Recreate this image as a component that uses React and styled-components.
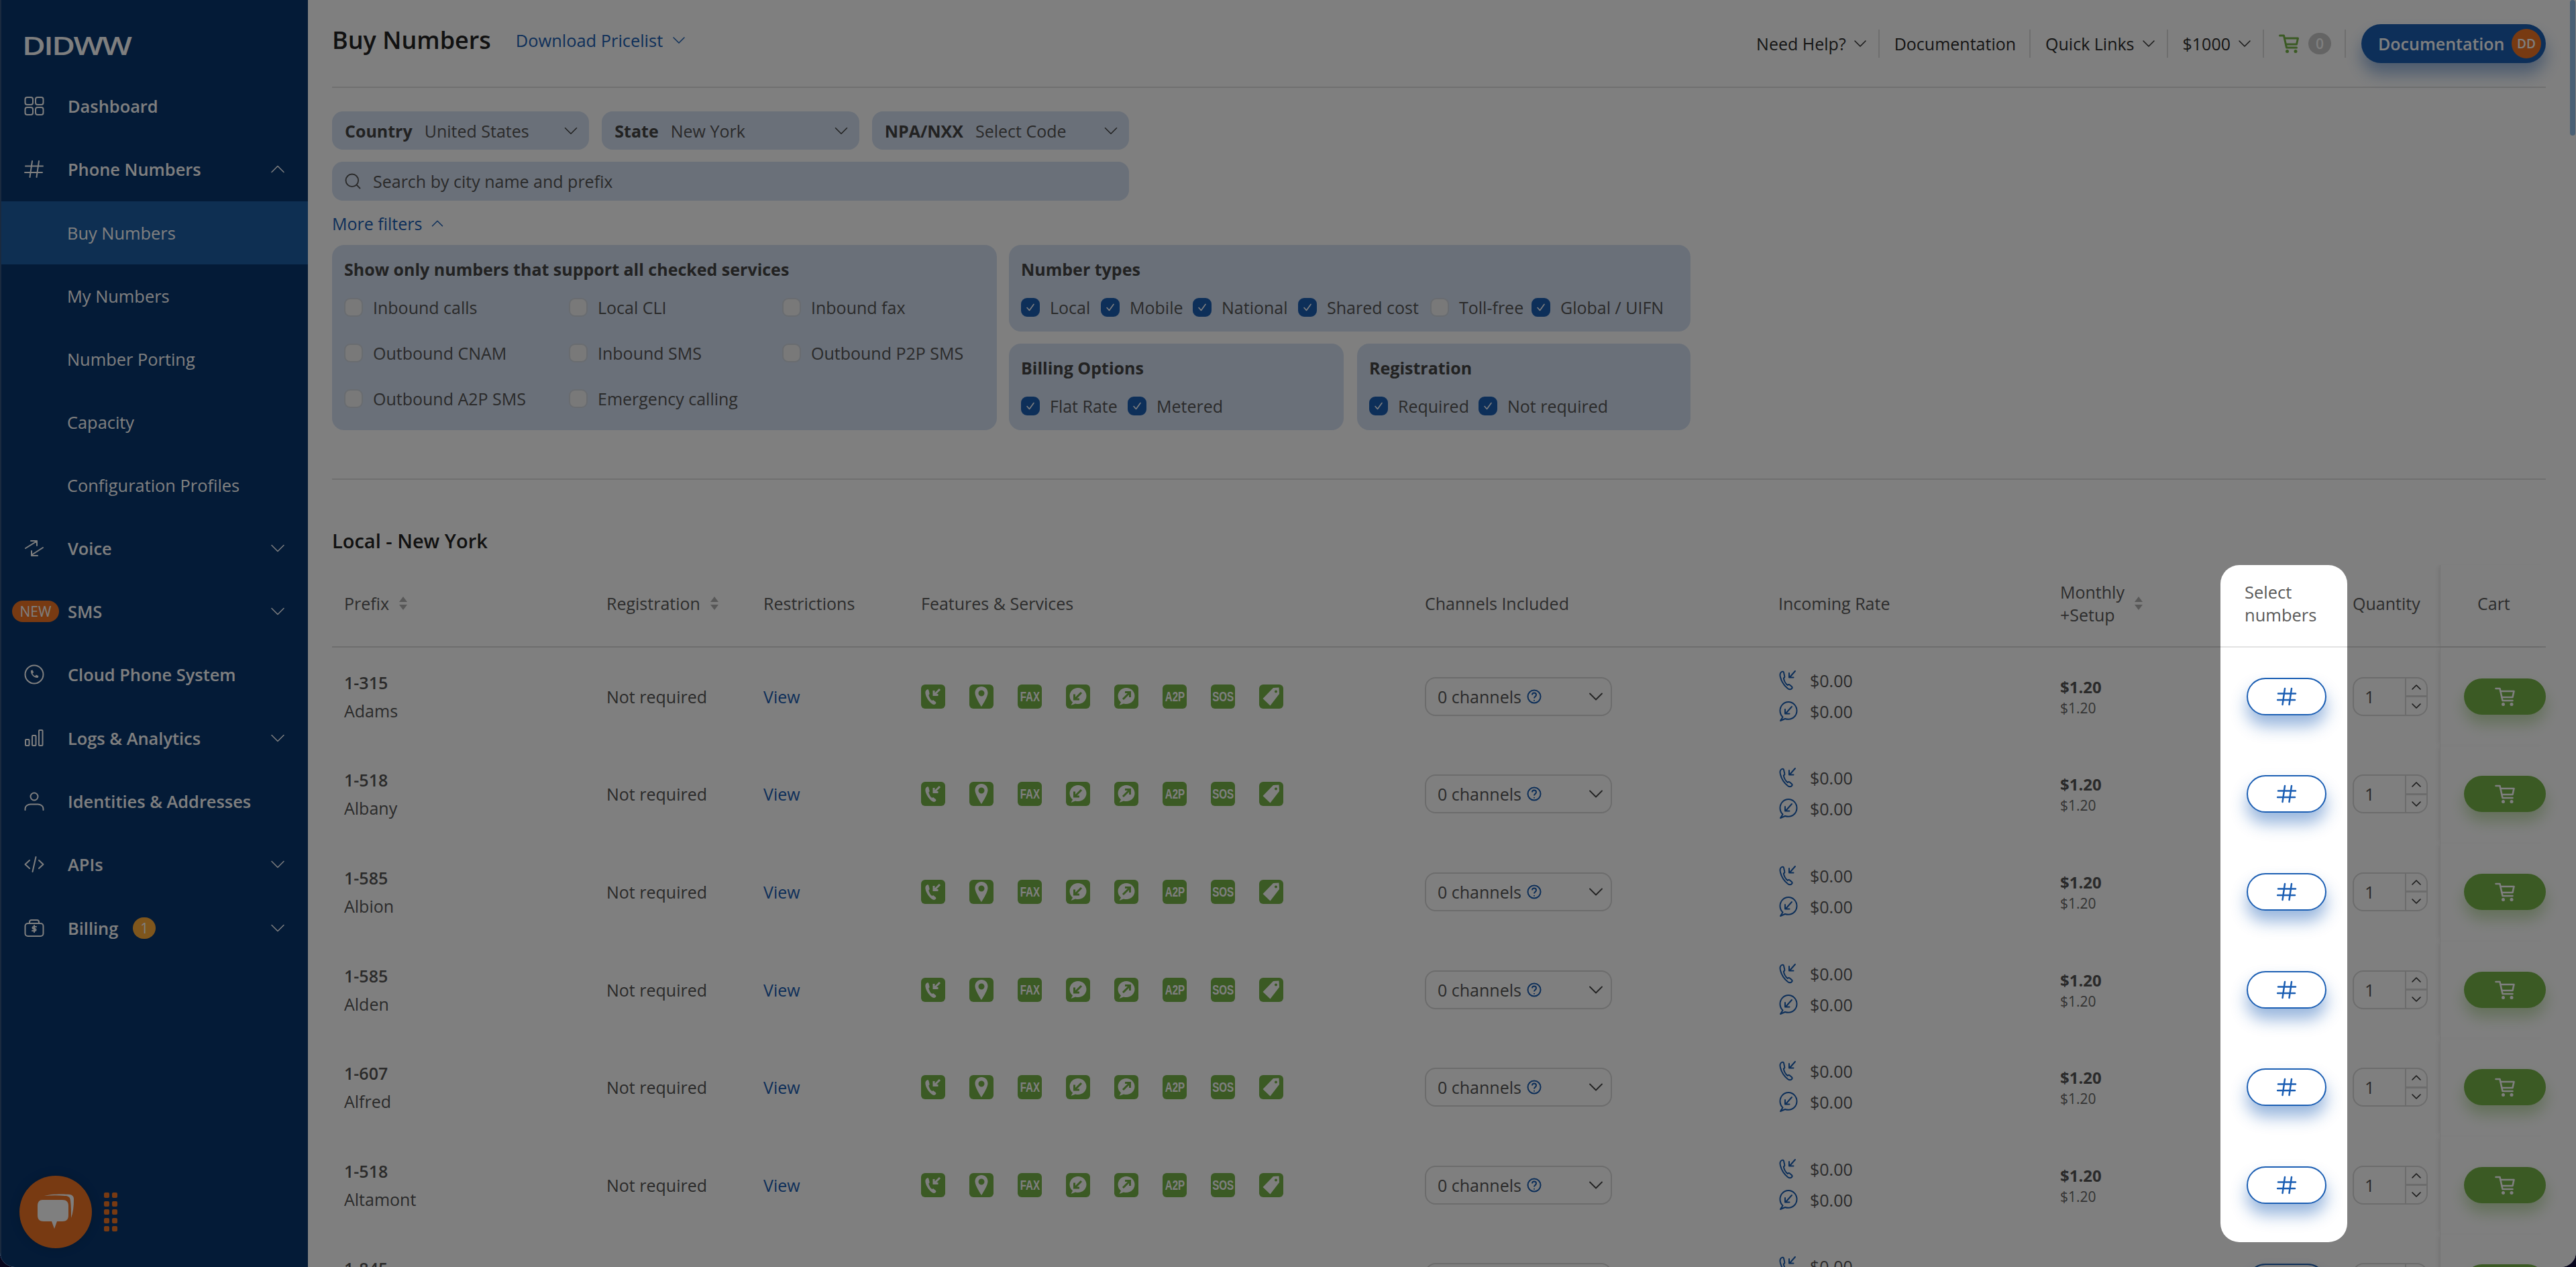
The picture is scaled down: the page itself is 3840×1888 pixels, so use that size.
import React from 'react';
import styled, { createGlobalStyle } from 'styled-components';
import { ChevronDown, ChevronUp, Search } from 'lucide-react';

const GlobalStyle = createGlobalStyle`
  * { box-sizing: border-box; }
  html, body { margin: 0; padding: 0; background: #07061c; }
  body { font-family: "Open Sans", "Liberation Sans", sans-serif; overflow: hidden; }
`;

const Root = styled.div`
  position: relative;
  display: flex;
  width: 3840px;
  height: 1888px;
  overflow: hidden;
  background: #fff;
  border-radius: 0 0 22px 22px;
`;

const Overlay = styled.div`
  position: absolute;
  inset: 0;
  z-index: 10;
  background: rgba(0, 0, 0, 0.5);
`;

const Scrollbar = styled.div`
  position: absolute;
  top: 0;
  right: 1px;
  width: 8px;
  height: 202px;
  border-radius: 4px;
  background: #94c0ea;
`;

/* sidebar */
const Sidebar = styled.aside`
  flex: 0 0 459px;
  height: 100%;
  background: #08366f;
  border-left: 2px solid #35557f;
  color: #fff;
`;

const Logo = styled.div`
  height: 111px;
  padding: 38px 0 0 31px;
  font-size: 38px;
  font-weight: 600;
  line-height: 58px;
  letter-spacing: -2px;
  span {
    display: inline-block;
    transform: scaleX(1.25);
    transform-origin: left center;
  }
`;

const NavRow = styled.div`
  display: flex;
  align-items: center;
  height: ${({ $sub }) => ($sub ? '94px' : '94.3px')};
  padding-left: ${({ $sub }) => ($sub ? '98px' : '34px')};
  padding-right: 27px;
  background: ${({ $active }) => ($active ? '#1c5ea4' : 'transparent')};
  font-size: 25.4px;
  font-weight: ${({ $sub }) => ($sub ? 400 : 600)};
`;

const NavIcon = styled.div`
  width: 65px;
  flex: none;
  display: flex;
  svg { display: block; }
`;

const NavLabel = styled.span`
  flex: 1;
`;

const NewBadge = styled.span`
  position: absolute;
  left: 16px;
  top: 50%;
  transform: translateY(-50%);
  width: 70px;
  height: 32px;
  border-radius: 16px;
  background: #f07525;
  font-size: 21px;
  font-weight: 400;
  line-height: 32px;
  text-align: center;
`;

const NavWrap = styled.div`
  position: relative;
`;

const CountBadge = styled.span`
  width: 34px;
  height: 32px;
  margin-left: 22px;
  margin-right: auto;
  border-radius: 16px;
  background: #ffac38;
  font-size: 21px;
  font-weight: 400;
  line-height: 32px;
  text-align: center;
`;

const ChatWidget = styled.div`
  position: absolute;
  left: 29px;
  top: 1752px;
  display: flex;
  align-items: center;
  gap: 18px;
`;

const ChatCircle = styled.div`
  width: 108px;
  height: 108px;
  border-radius: 50%;
  background: #f07525;
  display: flex;
  align-items: center;
  justify-content: center;
  box-shadow: 0 0 16px rgba(0, 0, 0, 0.15);
`;

const Dots = styled.div`
  display: grid;
  grid-template-columns: 8px 8px;
  gap: 4.5px 4px;
  div {
    height: 8px;
    border-radius: 2px;
    background: #f07525;
  }
`;

/* main */
const Main = styled.main`
  flex: 1;
  min-width: 0;
  height: 100%;
  overflow: hidden;
  padding: 0 45px 0 36px;
`;

const TopBar = styled.header`
  display: flex;
  align-items: center;
  justify-content: space-between;
  height: 131px;
  border-bottom: 2px solid #e0e0e0;
`;

const TitleGroup = styled.div`
  display: flex;
  align-items: center;
  gap: 37px;
  padding-bottom: 10px;
`;

const PageTitle = styled.h1`
  margin: 0;
  font-size: 36px;
  font-weight: 600;
  color: #222;
`;

const LinkDrop = styled.a`
  display: inline-flex;
  align-items: center;
  gap: 8px;
  font-size: 25.4px;
  color: #1b5eb3;
`;

const TopActions = styled.div`
  display: flex;
  align-items: center;
  color: #2b2b2b;
  font-size: 25px;
`;

const TopItem = styled.div`
  display: flex;
  align-items: center;
  gap: ${({ $chev }) => ($chev ? 5 : 12)}px;
  height: 58px;
  padding: 0 ${({ $chev }) => ($chev ? 13 : 22)}px 0 22px;
  position: relative;
  &::after {
    content: '';
    position: absolute;
    right: 0;
    top: 8px;
    bottom: 8px;
    width: 2px;
    background: #dcdcdc;
  }
`;

const CartItem = styled(TopItem)`
  color: #76b448;
`;

const CartCount = styled.span`
  width: 34px;
  height: 32px;
  margin-left: 2px;
  border-radius: 16px;
  background: #c8c8c8;
  color: #fff;
  font-size: 21px;
  font-weight: 600;
  line-height: 32px;
  text-align: center;
`;

const ProfileButton = styled.div`
  display: flex;
  align-items: center;
  justify-content: space-between;
  width: 275px;
  height: 58px;
  margin-left: 23px;
  padding: 0 7px 0 25px;
  border-radius: 29px;
  background: #1b5eb3;
  color: #fff;
  font-weight: 600;
  box-shadow: 0 16px 24px rgba(27, 94, 179, 0.45);
`;

const Avatar = styled.span`
  width: 44px;
  height: 44px;
  border-radius: 50%;
  background: #f07525;
  font-size: 19px;
  line-height: 44px;
  text-align: center;
`;

const SelectRow = styled.div`
  display: flex;
  gap: 19px;
  width: 1188px;
  margin-top: 35px;
`;

const FilterSelect = styled.div`
  flex: 1;
  display: flex;
  align-items: center;
  gap: 18px;
  height: 57px;
  padding: 0 10px 0 19px;
  border-radius: 16px;
  background: #d4e0f2;
  color: #555;
  font-size: 25px;
  b { font-weight: 700; color: #444; }
  svg { margin-left: auto; color: #444; }
`;

const SearchBox = styled.div`
  display: flex;
  align-items: center;
  gap: 16px;
  width: 1188px;
  height: 58px;
  margin-top: 18px;
  padding: 0 17px;
  border-radius: 16px;
  background: #d4e0f2;
  color: #555;
  font-size: 25px;
`;

const MoreFilters = styled(LinkDrop)`
  display: flex;
  height: 34px;
  margin-top: 17px;
  font-size: 25px;
`;

const PanelGrid = styled.div`
  display: flex;
  gap: 18px;
  margin-top: 15px;
`;

const Panel = styled.section`
  width: ${({ $w }) => $w}px;
  height: ${({ $h }) => $h}px;
  padding: 18px;
  border-radius: 18px;
  background: #d4e0f2;
`;

const PanelTitle = styled.h3`
  margin: 0;
  height: 36px;
  font-size: 25px;
  font-weight: 700;
  line-height: 36px;
  color: #444;
`;

const ServicesGrid = styled.div`
  display: grid;
  grid-template-columns: 335px 318px auto;
  grid-auto-rows: 68px;
  margin-top: 5px;
`;

const CheckRow = styled.div`
  display: flex;
  margin-top: 5px;
  height: 68px;
`;

const Check = styled.label`
  display: flex;
  align-items: center;
  gap: 15px;
  height: 68px;
  font-size: 25px;
  color: #555;
`;

const Box = styled.span`
  width: 28px;
  height: 28px;
  flex: none;
  border-radius: 9px;
  display: flex;
  align-items: center;
  justify-content: center;
  background: ${({ $on }) => ($on ? '#1b5eb3' : '#f2f2f2')};
  border: 2px solid ${({ $on }) => ($on ? '#1b5eb3' : '#d2d8e0')};
`;

const RightPanels = styled.div`
  display: flex;
  flex-direction: column;
  gap: 18px;
  width: 1016px;
`;

const BottomPanels = styled.div`
  display: flex;
  gap: 20px;
`;

const Divider = styled.hr`
  margin: 72px 0 0;
  border: 0;
  border-top: 2px solid #e0e0e0;
`;

const SectionTitle = styled.h2`
  margin: 71px 0 2px;
  height: 40px;
  font-size: 29px;
  font-weight: 600;
  line-height: 40px;
  color: #222;
`;

/* table */
const TableWrap = styled.div`
  position: relative;
  margin-top: 16px;
`;

const columns = '391px 234px 235px 751px 527px 420px 257px 189px 138px 158px';

const HeadRow = styled.div`
  display: grid;
  grid-template-columns: ${columns};
  height: 123px;
  border-bottom: 2px solid #dcdcdc;
  align-items: stretch;
`;

const HeadCell = styled.div`
  display: flex;
  align-items: center;
  gap: 14px;
  padding-left: ${({ $pad }) => $pad ?? 18}px;
  padding-bottom: 8px;
  font-size: 25px;
  line-height: 34px;
  color: #5a5a5a;
`;

const StickyCell = styled(HeadCell)`
  box-shadow: -5px 0 6px -2px rgba(0, 0, 0, 0.07);
  border-left: 1px solid #e8e8e8;
`;

const Row = styled.div`
  display: grid;
  grid-template-columns: ${columns};
  height: 145.6px;
`;

const Cell = styled.div`
  display: flex;
  flex-direction: ${({ $col }) => ($col ? 'column' : 'row')};
  align-items: ${({ $col }) => ($col ? 'flex-start' : 'center')};
  justify-content: center;
  padding-left: ${({ $pad }) => $pad ?? 18}px;
  font-size: 25px;
  color: #555;
`;

const PlainCell = styled(Cell)`
  justify-content: flex-start;
`;

const CartCell = styled(Cell)`
  justify-content: flex-end;
  box-shadow: -5px 0 6px -2px rgba(0, 0, 0, 0.07);
  border-left: 1px solid #e8e8e8;
`;

const Prefix = styled.b`
  font-weight: 600;
  line-height: 42px;
`;

const City = styled.span`
  line-height: 42px;
  min-height: 42px;
`;

const ViewLink = styled.a`
  color: #1b5eb3;
`;

const FeatureList = styled.div`
  display: flex;
  gap: 36px;
`;

const Feature = styled.div`
  width: 36px;
  height: 36px;
  border-radius: 6px;
  background: #76b448;
  color: #fff;
  display: flex;
  align-items: center;
  justify-content: center;
  overflow: hidden;
`;

const FeatureText = styled.span`
  display: inline-block;
  font-family: "Liberation Sans", sans-serif;
  font-size: 21px;
  font-weight: 700;
  transform: scaleX(0.72);
`;

const ChannelSelect = styled.div`
  display: flex;
  align-items: center;
  gap: 8px;
  width: 279px;
  height: 58px;
  padding: 0 4px 0 17px;
  border: 2px solid #d8d8d8;
  border-radius: 16px;
  color: #555;
  svg:last-child { margin-left: auto; color: #444; }
`;

const RateList = styled.div`
  display: grid;
  grid-template-columns: 47px auto;
  grid-auto-rows: 46px;
  align-items: center;
  margin-top: -2px;
`;

const Price = styled.b`
  font-weight: 700;
  font-size: 24px;
  line-height: 34px;
`;

const PriceSmall = styled.span`
  font-size: 21px;
  line-height: 28px;
  color: #666;
`;

const NumberPill = styled.div`
  width: 119px;
  height: 56px;
  border-radius: 28px;
  border: 2px solid #1b5eb3;
  background: #fff;
  color: #1b5eb3;
  display: flex;
  align-items: center;
  justify-content: center;
  box-shadow: 0 16px 24px rgba(27, 94, 179, 0.45);
`;

const Stepper = styled.div`
  display: flex;
  width: 112px;
  height: 58px;
  border: 2px solid #d8d8d8;
  border-radius: 16px;
`;

const StepValue = styled.div`
  width: 76px;
  padding-left: 16px;
  line-height: 54px;
  font-size: 26px;
  color: #555;
`;

const StepButtons = styled.div`
  flex: 1;
  display: flex;
  flex-direction: column;
  border-left: 2px solid #d8d8d8;
  div {
    flex: 1;
    display: flex;
    align-items: center;
    justify-content: center;
    color: #333;
  }
  div:first-child { border-bottom: 3px solid #d8d8d8; }
`;

const CartButton = styled.div`
  width: 122px;
  height: 54px;
  border-radius: 27px;
  background: #76b448;
  color: #fff;
  display: flex;
  align-items: center;
  justify-content: center;
  box-shadow: 0 14px 22px rgba(118, 180, 72, 0.4);
`;

/* sits above the overlay, this is the column the tour points at */
const HighlightColumn = styled.div`
  position: absolute;
  z-index: 20;
  top: 0;
  left: 2815px;
  width: 189px;
  height: 1009px;
  border-radius: 28px;
  background: #fff;
`;

const HighlightHead = styled.div`
  display: flex;
  align-items: center;
  height: 123px;
  padding: 0 0 8px 36px;
  border-bottom: 2px solid #e2e2e2;
  font-size: 25.5px;
  line-height: 34px;
  color: #5a5a5a;
`;

const HighlightSlot = styled.div`
  display: flex;
  align-items: center;
  height: 145.6px;
  padding-left: 39px;
`;

const sw = { fill: 'none', stroke: 'currentColor', strokeWidth: 2, strokeLinecap: 'round', strokeLinejoin: 'round' };

const GridIcon = () => (
  <svg width="30" height="30" viewBox="0 0 30 30" {...sw}>
    <rect x="1.5" y="2" width="11.5" height="11" rx="3" />
    <rect x="17" y="2" width="11.5" height="11" rx="3" />
    <rect x="1.5" y="17" width="11.5" height="11" rx="3" />
    <rect x="17" y="17" width="11.5" height="11" rx="3" />
  </svg>
);

const HashIcon = ({ weight = 2 }) => (
  <svg width="30" height="30" viewBox="0 0 30 30" {...sw} strokeWidth={weight}>
    <path d="M2 10.5h26M1 20h26M12 3L8.5 27M22 3l-3.5 24" />
  </svg>
);

const CartIcon = ({ weight = 2.6 }) => (
  <svg width="30" height="30" viewBox="0 0 30 30" {...sw} strokeWidth={weight}>
    <path d="M1.5 3h6l4 18h15" />
    <path d="M8.500 7h20l-2 9H10.500" />
    <circle cx="12.500" cy="26.500" r="2.500" fill="currentColor" stroke="none" />
    <circle cx="25" cy="26.500" r="2.500" fill="currentColor" stroke="none" />
  </svg>
);

const VoiceIcon = () => (
  <svg width="30" height="30" viewBox="0 0 30 30" {...sw}>
    <path d="M2 15L18 5M10 4h9v7M28 14l-17 11M20 26h-9v-7" />
  </svg>
);

const CloudIcon = () => (
  <svg width="30" height="30" viewBox="0 0 30 30" {...sw}>
    <circle cx="15" cy="15" r="13.5" />
    <path d="M10 9l2.6-.6 1.6 3.6-1.8 1.4c.8 1.8 2.2 3.200 4 4l1.4-1.800 3.600 1.600-.6 2.600c-6 .8-11.600-4.800-10.800-10.800z" fill="currentColor" stroke="none" />
  </svg>
);

const BarsIcon = () => (
  <svg width="30" height="30" viewBox="0 0 30 30" {...sw}>
    <rect x="2" y="17" width="5.500" height="9" rx="1" />
    <rect x="12" y="11" width="5.500" height="15" rx="1" />
    <rect x="22" y="3" width="5.500" height="23" rx="1" />
  </svg>
);

const PersonIcon = () => (
  <svg width="30" height="30" viewBox="0 0 30 30" {...sw}>
    <circle cx="15" cy="8" r="5.500" />
    <path d="M1.500 28v-2c0-4 4-6.500 8-6.500h11c4 0 8 2.500 8 6.500v2" />
  </svg>
);

const CodeIcon = () => (
  <svg width="30" height="30" viewBox="0 0 30 30" {...sw}>
    <path d="M8 9l-6.500 6L8 21M22 9l6.500 6L22 21M17.500 4l-5 22" />
  </svg>
);

const BillingIcon = () => (
  <svg width="30" height="30" viewBox="0 0 30 30" {...sw}>
    <rect x="1.500" y="8" width="27" height="19" rx="4" />
    <path d="M8 8V6c0-2 1.500-3 3-3h8c1.500 0 3 1 3 3v2M18 13h-4c-2 0-2 3 0 3h2c2 0 2 3 0 3h-4M15 11v10" />
  </svg>
);

const IncomingCallGlyph = () => (
  <svg width="30" height="30" viewBox="0 0 30 30">
    <path d="M6 4.500c-2 1-3 3-2.500 6 1 5.500 5.500 13 11 16 1.800.8 3.500.3 4.500-1 .8-1 .4-2-.5-2.800l-2.500-2c-.9-.7-1.900-.4-2.600.3-2.500-1.500-4.500-5.500-5-8.500 1-.5 1.500-1.300 1.100-2.500L8.400 5.500C8 4.300 7 4 6 4.500z" fill="currentColor" />
    <path d="M25 4l-8 8M16 6v6.500h6.500" fill="none" stroke="currentColor" strokeWidth="3" />
  </svg>
);

const PinGlyph = () => (
  <svg width="24" height="32" viewBox="0 0 24 32">
    <path fillRule="evenodd" d="M12 1c-5.500 0-9.500 4-9.500 9.500C2.500 17 12 31 12 31s9.500-14 9.500-20.500C21.500 5 17.500 1 12 1zm0 5.500a4.500 4.500 0 1 1 0 9 4.500 4.500 0 0 1 0-9z" fill="currentColor" />
  </svg>
);

const ChatGlyph = ({ out }) => (
  <svg width="30" height="32" viewBox="0 0 30 32">
    <path d="M15 3C8 3 2.500 8.500 2.500 15c0 4 1.800 7.200 4.500 9.500L4.500 29l6.500-2.500c1.300.4 2.600.6 4 .6 7 0 12.500-5.500 12.500-12S22 3 15 3z" fill="currentColor" />
    {out ? (
      <path d="M10 20l10-10M13 9.500h7.500V17" fill="none" stroke="#76b448" strokeWidth="3" />
    ) : (
      <path d="M20 10L10 20M9.500 12.500V20H17" fill="none" stroke="#76b448" strokeWidth="3" />
    )}
  </svg>
);

const TagGlyph = () => (
  <svg width="28" height="30" viewBox="0 0 28 30">
    <path fillRule="evenodd" d="M17 2l8.500-.5.5 9.500-13.500 17.500L1.500 18 17 2zm4 3.500a2 2 0 1 0 0 4 2 2 0 0 0 0-4z" fill="currentColor" />
  </svg>
);

const Tick = () => (
  <svg width="16" height="16" viewBox="0 0 16 16" fill="none" stroke="#fff" strokeWidth="1.600" strokeLinecap="round" strokeLinejoin="round">
    <path d="M3 8.500L6.500 12.500L13 3.500" />
  </svg>
);

const SortIcon = () => (
  <svg width="14" height="22" viewBox="0 0 14 22" fill="#b0b0b0">
    <path d="M7 1l6 8H1zM7 21l-6-8h12z" />
  </svg>
);

const HelpIcon = () => (
  <svg width="22" height="24" viewBox="0 0 22 24" fill="none" stroke="#1b5eb3" strokeWidth="2">
    <circle cx="11" cy="12" r="9.500" />
    <path d="M8 9.500c0-4 6-4 6 0 0 2.500-3 2.500-3 5M11 17v1.500" />
  </svg>
);

const RatePhone = () => (
  <svg width="30" height="32" viewBox="0 0 30 32" fill="none" stroke="#1b5eb3" strokeWidth="2" strokeLinecap="round" strokeLinejoin="round">
    <path d="M5 3C2.500 4.500 2 7.500 3 11c1.500 6 6 13 11 17 2 1.500 4.500 1.500 6 0 1-1 .8-2-.2-3l-3-2.500c-1-.8-2-.5-3 .5-3-2-5.500-7-6-10.500 1.300-.5 1.800-1.500 1.400-3L8 4c-.4-1.300-1.800-1.700-3-1z" />
    <path d="M25 2l-8 9M16 5v6.500h6.500" />
  </svg>
);

const RateChat = () => (
  <svg width="30" height="32" viewBox="0 0 30 32" fill="none" stroke="#1b5eb3" strokeWidth="2" strokeLinecap="round" strokeLinejoin="round">
    <path d="M15 2C8 2 2.500 8 2.500 15c0 4 1.500 7 4 9.500L3 30l7-3c1.500.5 3 .8 5 .8 7 0 12.500-5.800 12.500-12.800S22 2 15 2z" />
    <path d="M20 9l-9 10M10 13v6.500h6.500" />
  </svg>
);

const BubbleIcon = () => (
  <svg width="64" height="64" viewBox="0 0 64 64">
    <path d="M15 8c8-3 30-3 38-2 4 .5 6 3 6 7 0 10-1 20-4 28 0-10 0-18-1-26-.5-5-3-7-8-7-10-1-20-1-31 0z" fill="#fff" />
    <path d="M12 14h30c6 0 9 3 9 9v14c0 6-3 9-9 9H34l-4 11-4-11H14c-6 0-9-3-9-9V23c0-6 3-9 7-9z" fill="#fff" />
  </svg>
);

const navTop = [
  { label: 'Voice', Icon: VoiceIcon, chev: true },
  { label: 'SMS', isNew: true, chev: true },
  { label: 'Cloud Phone System', Icon: CloudIcon },
  { label: 'Logs & Analytics', Icon: BarsIcon, chev: true },
  { label: 'Identities & Addresses', Icon: PersonIcon },
  { label: 'APIs', Icon: CodeIcon, chev: true },
];

const subLinks = ['Buy Numbers', 'My Numbers', 'Number Porting', 'Capacity', 'Configuration Profiles'];

const services = [
  'Inbound calls', 'Local CLI', 'Inbound fax',
  'Outbound CNAM', 'Inbound SMS', 'Outbound P2P SMS',
  'Outbound A2P SMS', 'Emergency calling',
];

const rows = [
  { prefix: '1-315', city: 'Adams' },
  { prefix: '1-518', city: 'Albany' },
  { prefix: '1-585', city: 'Albion' },
  { prefix: '1-585', city: 'Alden' },
  { prefix: '1-607', city: 'Alfred' },
  { prefix: '1-518', city: 'Altamont' },
  { prefix: '1-845', city: '' },
];

const CheckItem = ({ label, on, w }) => (
  <Check style={w ? { width: w } : undefined}>
    <Box $on={on}>{on && <Tick />}</Box>
    {label}
  </Check>
);

const NumberRow = ({ row, index }) => (
  <Row>
    <Cell $col>
      <Prefix>{row.prefix}</Prefix>
      <City>{row.city}</City>
    </Cell>
    <PlainCell>Not required</PlainCell>
    <PlainCell><ViewLink>View</ViewLink></PlainCell>
    <PlainCell>
      <FeatureList>
        <Feature><IncomingCallGlyph /></Feature>
        <Feature><PinGlyph /></Feature>
        <Feature><FeatureText>FAX</FeatureText></Feature>
        <Feature><ChatGlyph /></Feature>
        <Feature><ChatGlyph out /></Feature>
        <Feature><FeatureText>A2P</FeatureText></Feature>
        <Feature><FeatureText>SOS</FeatureText></Feature>
        <Feature><TagGlyph /></Feature>
      </FeatureList>
    </PlainCell>
    <PlainCell>
      <ChannelSelect>
        0 channels <HelpIcon />
        <ChevronDown size={36} strokeWidth={1.2} />
      </ChannelSelect>
    </PlainCell>
    <PlainCell>
      <RateList>
        <RatePhone /><span>$0.00</span>
        <RateChat /><span>$0.00</span>
      </RateList>
    </PlainCell>
    <Cell $col>
      <Price>$1.20</Price>
      <PriceSmall>$1.20</PriceSmall>
    </Cell>
    <PlainCell $pad={39}>
      {index > 5 && <NumberPill><HashIcon weight={2.5} /></NumberPill>}
    </PlainCell>
    <PlainCell $pad={8}>
      <Stepper>
        <StepValue>1</StepValue>
        <StepButtons>
          <div><ChevronUp size={24} strokeWidth={1.6} /></div>
          <div><ChevronDown size={24} strokeWidth={1.6} /></div>
        </StepButtons>
      </Stepper>
    </PlainCell>
    <CartCell $pad={0}>
      <CartButton><CartIcon /></CartButton>
    </CartCell>
  </Row>
);

export default function App() {
  return (
    <Root>
      <GlobalStyle />
      <Sidebar>
        <Logo><span>DIDWW</span></Logo>
        <NavRow>
          <NavIcon><GridIcon /></NavIcon>
          <NavLabel>Dashboard</NavLabel>
        </NavRow>
        <NavRow>
          <NavIcon><HashIcon /></NavIcon>
          <NavLabel>Phone Numbers</NavLabel>
          <ChevronUp size={36} strokeWidth={1} />
        </NavRow>
        {subLinks.map((link, i) => (
          <NavRow key={link} $sub $active={i === 0}>{link}</NavRow>
        ))}
        {navTop.map(({ label, Icon, chev, isNew }) => (
          <NavWrap key={label}>
            {isNew && <NewBadge>NEW</NewBadge>}
            <NavRow>
              <NavIcon>{Icon && <Icon />}</NavIcon>
              <NavLabel>{label}</NavLabel>
              {chev && <ChevronDown size={36} strokeWidth={1} />}
            </NavRow>
          </NavWrap>
        ))}
        <NavRow>
          <NavIcon><BillingIcon /></NavIcon>
          <span>Billing</span>
          <CountBadge>1</CountBadge>
          <ChevronDown size={36} strokeWidth={1} />
        </NavRow>
      </Sidebar>

      <Main>
        <TopBar>
          <TitleGroup>
            <PageTitle>Buy Numbers</PageTitle>
            <LinkDrop>Download Pricelist <ChevronDown size={32} strokeWidth={1.1} /></LinkDrop>
          </TitleGroup>
          <TopActions>
            <TopItem $chev>Need Help? <ChevronDown size={32} strokeWidth={1.1} /></TopItem>
            <TopItem>Documentation</TopItem>
            <TopItem $chev>Quick Links <ChevronDown size={32} strokeWidth={1.1} /></TopItem>
            <TopItem $chev>$1000 <ChevronDown size={32} strokeWidth={1.1} /></TopItem>
            <CartItem>
              <CartIcon weight={3} />
              <CartCount>0</CartCount>
            </CartItem>
            <ProfileButton>
              Documentation
              <Avatar>DD</Avatar>
            </ProfileButton>
          </TopActions>
        </TopBar>

        <SelectRow>
          <FilterSelect><b>Country</b> United States <ChevronDown size={34} strokeWidth={1.1} /></FilterSelect>
          <FilterSelect><b>State</b> New York <ChevronDown size={34} strokeWidth={1.1} /></FilterSelect>
          <FilterSelect><b>NPA/NXX</b> Select Code <ChevronDown size={34} strokeWidth={1.1} /></FilterSelect>
        </SelectRow>
        <SearchBox><Search size={28} strokeWidth={1.6} /> Search by city name and prefix</SearchBox>
        <MoreFilters>More filters <ChevronUp size={30} strokeWidth={1.2} /></MoreFilters>

        <PanelGrid>
          <Panel $w={991} $h={276}>
            <PanelTitle>Show only numbers that support all checked services</PanelTitle>
            <ServicesGrid>
              {services.map((s) => <CheckItem key={s} label={s} />)}
            </ServicesGrid>
          </Panel>
          <RightPanels>
            <Panel $w={1016} $h={129}>
              <PanelTitle>Number types</PanelTitle>
              <CheckRow>
                <CheckItem label="Local" on w={119} />
                <CheckItem label="Mobile" on w={137} />
                <CheckItem label="National" on w={157} />
                <CheckItem label="Shared cost" on w={197} />
                <CheckItem label="Toll-free" w={151} />
                <CheckItem label="Global / UIFN" on />
              </CheckRow>
            </Panel>
            <BottomPanels>
              <Panel $w={499} $h={129}>
                <PanelTitle>Billing Options</PanelTitle>
                <CheckRow>
                  <CheckItem label="Flat Rate" on w={159} />
                  <CheckItem label="Metered" on />
                </CheckRow>
              </Panel>
              <Panel $w={497} $h={129}>
                <PanelTitle>Registration</PanelTitle>
                <CheckRow>
                  <CheckItem label="Required" on w={163} />
                  <CheckItem label="Not required" on />
                </CheckRow>
              </Panel>
            </BottomPanels>
          </RightPanels>
        </PanelGrid>

        <Divider />
        <SectionTitle>Local - New York</SectionTitle>

        <TableWrap>
          <HeadRow>
            <HeadCell>Prefix <SortIcon /></HeadCell>
            <HeadCell>Registration <SortIcon /></HeadCell>
            <HeadCell>Restrictions</HeadCell>
            <HeadCell>Features &amp; Services</HeadCell>
            <HeadCell>Channels Included</HeadCell>
            <HeadCell>Incoming Rate</HeadCell>
            <HeadCell>
              <span>Monthly<br />+Setup</span>
              <SortIcon />
            </HeadCell>
            <HeadCell />
            <HeadCell $pad={8}>Quantity</HeadCell>
            <StickyCell $pad={55}>Cart</StickyCell>
          </HeadRow>
          {rows.map((row, i) => <NumberRow key={row.prefix + i} row={row} index={i} />)}
          <HighlightColumn>
            <HighlightHead><span>Select<br />numbers</span></HighlightHead>
            {rows.slice(0, 6).map((row) => (
              <HighlightSlot key={row.city}>
                <NumberPill><HashIcon weight={2.5} /></NumberPill>
              </HighlightSlot>
            ))}
          </HighlightColumn>
        </TableWrap>
      </Main>

      <ChatWidget>
        <ChatCircle><BubbleIcon /></ChatCircle>
        <Dots>{Array.from({ length: 10 }, (_, i) => <div key={i} />)}</Dots>
      </ChatWidget>
      <Scrollbar />
      <Overlay />
    </Root>
  );
}
